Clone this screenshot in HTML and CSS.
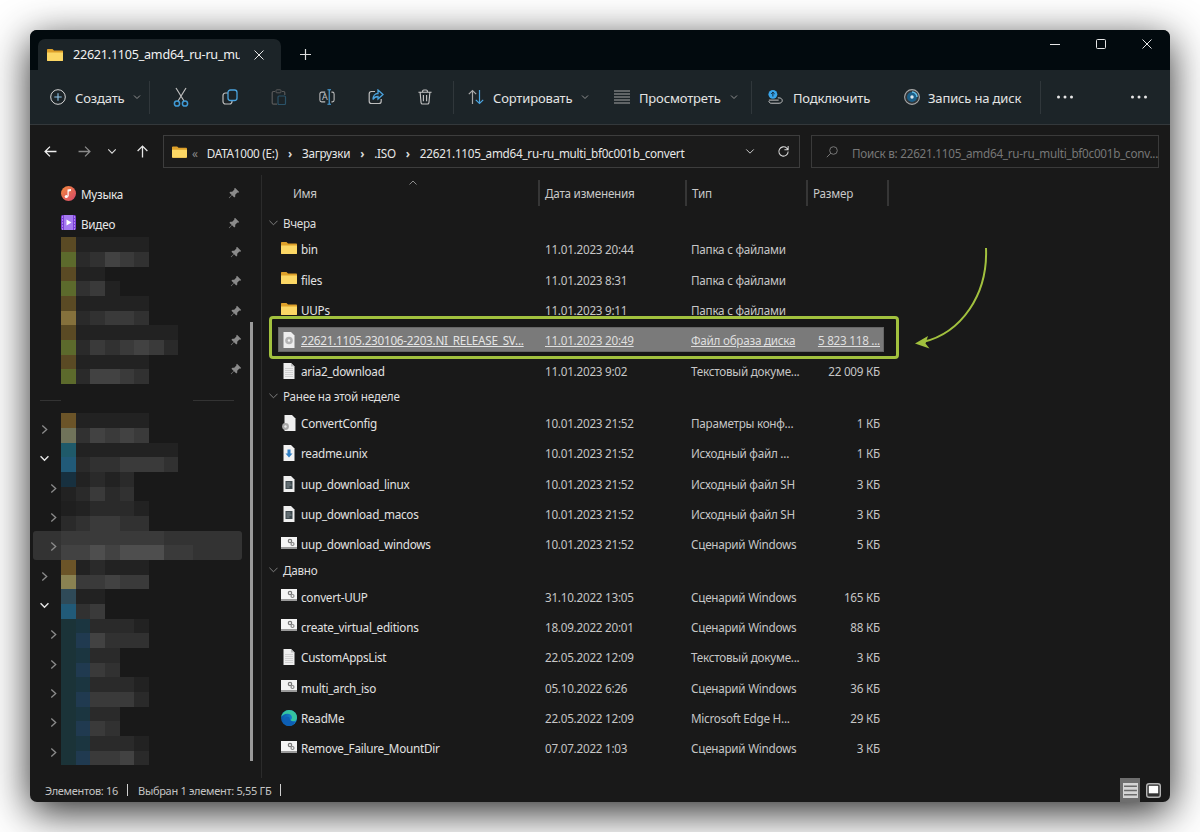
FILE: index.html
```html
<!DOCTYPE html>
<html lang="ru">
<head>
  <meta charset="UTF-8">
  <title>22621.1105_amd64_ru-ru_multi_bf0c001b_convert</title>
  <link rel="stylesheet" href="styles.css">
</head>
<body>
<svg class="sprite" width="0" height="0">
  <defs>
    <linearGradient id="music-grad" x1="0" y1="0" x2="1" y2="1"><stop offset="0" stop-color="#f28a3c"/><stop offset="1" stop-color="#d6476b"/></linearGradient>
    <linearGradient id="edge-grad" x1="0" y1="0" x2="1" y2="0"><stop offset="0" stop-color="#0b56a8"/><stop offset="1" stop-color="#1a93e0"/></linearGradient>
    <symbol id="i-folder" viewBox="0 0 16 14">
      <path d="M0 2c0-.6.4-1 1-1h4.500l1.500 1.500h8c.6 0 1 .4 1 1V12c0 .6-.4 1-1 1H1c-.6 0-1-.4-1-1z" fill="#dda02a"/>
      <path d="M0 4.500h16V12c0 .6-.4 1-1 1H1c-.6 0-1-.4-1-1z" fill="#fbd765"/>
    </symbol>
    <symbol id="i-doc" viewBox="0 0 16 16">
      <path d="M2.500 0H10l3.500 3.500V16h-11z" fill="#eeeeee"/>
      <path d="M10 0v3.500h3.500z" fill="#bdbdbd"/>
      <path d="M4 5.500h8M4 7.500h8M4 9.500h8M4 11.500h8M4 13.500h8" stroke="#c4c4c4" stroke-width=".7"/>
    </symbol>
    <symbol id="i-script" viewBox="0 0 16 12">
      <rect width="16" height="12" fill="#f4f4f4"/>
      <rect y="10" width="16" height="2" fill="#9a9a9a"/>
      <circle cx="9" cy="4" r="1.700" fill="none" stroke="#777" stroke-width="1.200"/>
      <circle cx="11.500" cy="7" r="1.500" fill="none" stroke="#888" stroke-width="1.200"/>
    </symbol>
    <symbol id="i-shell" viewBox="0 0 16 16">
      <path d="M2.500 0H10l3.500 3.500V16h-11z" fill="#f0f0f0"/>
      <rect x="4.500" y="5" width="7" height="8" fill="#3f4a4f"/>
      <path d="M5.500 7h4M5.500 9h5M5.500 11h3" stroke="#9aa5aa" stroke-width=".8"/>
    </symbol>
    <symbol id="i-pin" viewBox="0 0 12 12">
      <path d="M7 .8l4.200 4.200-1 .8-.8-.2-2.200 2.200.1 1.800-1 1L4 8.300 1.200 11.200.8 10.800 3.700 8 1.400 5.700l1-1 1.800.1 2.200-2.200-.2-.8z" fill="#8a8a8a"/>
    </symbol>
    <symbol id="i-chev" viewBox="0 0 8 12">
      <path d="M1.500 1.500L6.500 6l-5 4.500" fill="none" stroke="#8c8c8c" stroke-width="1.500"/>
    </symbol>
    <symbol id="i-down" viewBox="0 0 12 8">
      <path d="M1.500 1.500L6 6l4.500-4.500" fill="none" stroke="#e8e8e8" stroke-width="1.600"/>
    </symbol>
    <symbol id="i-caret" viewBox="0 0 8 6">
      <path d="M1 1.500L4 4.500l3-3" fill="none" stroke="#8f8f8f" stroke-width="1"/>
    </symbol>
    <symbol id="i-dots" viewBox="0 0 18 4">
      <circle cx="2.500" cy="2" r="1.500" fill="#e6e6e6"/><circle cx="9" cy="2" r="1.500" fill="#e6e6e6"/><circle cx="15.500" cy="2" r="1.500" fill="#e6e6e6"/>
    </symbol>
  </defs>
</svg>

<div class="window">
  <div class="titlebar">
    <div class="tab">
      <svg class="tab-folder"><use href="#i-folder"/></svg>
      <span class="tab-title">22621.1105_amd64_ru-ru_multi_bf0c001b_convert</span>
      <svg class="tab-close" viewBox="0 0 10 10"><path d="M.5.500l9 9M9.500.500l-9 9" stroke="#e6e6e6" stroke-width="1"/></svg>
    </div>
    <svg class="tab-new" viewBox="0 0 11 11"><path d="M5.500 0v11M0 5.500h11" stroke="#dcdcdc" stroke-width="1.200"/></svg>
    <div class="win-controls">
      <div class="win-btn"><svg viewBox="0 0 10 10"><path d="M0 5.500h10" stroke="#e6e6e6"/></svg></div>
      <div class="win-btn"><svg viewBox="0 0 10 10"><rect x=".5" y=".5" width="9" height="9" rx="1" fill="none" stroke="#e6e6e6"/></svg></div>
      <div class="win-btn"><svg viewBox="0 0 10 10"><path d="M.5.500l9 9M9.500.500l-9 9" stroke="#e6e6e6"/></svg></div>
    </div>
  </div>

  <div class="commandbar">
    <div class="cmd cmd-new">
      <svg class="cmd-icon" viewBox="0 0 16 16"><circle cx="8" cy="8" r="7.300" fill="none" stroke="#d8d8d8"/><path d="M8 4.300v7.400M4.300 8h7.400" stroke="#8fc4e8" stroke-width="1.100"/></svg>
      <span>Создать</span>
      <svg class="caret"><use href="#i-caret"/></svg>
    </div>
    <div class="cmd-sep"></div>
    <div class="cmd-icons">
      <div class="icon-btn"><svg class="cmd-icon tall" viewBox="0 0 16 20"><path d="M3 1l8 13M13 1L5 14" stroke="#bdbdbd" stroke-width="1.200"/><circle cx="4" cy="16.500" r="2.600" fill="none" stroke="#3f9ad6" stroke-width="1.500"/><circle cx="12" cy="16.500" r="2.600" fill="none" stroke="#3f9ad6" stroke-width="1.500"/></svg></div>
      <div class="icon-btn"><svg class="cmd-icon" viewBox="0 0 16 16"><rect x="1" y="4" width="9" height="11" rx="2.500" fill="none" stroke="#bdbdbd" stroke-width="1.200"/><rect x="6" y="1" width="9" height="10.500" rx="2.500" fill="#1c2327" stroke="#4aa3de" stroke-width="1.300"/></svg></div>
      <div class="icon-btn"><svg class="cmd-icon" viewBox="0 0 16 16"><path d="M4 2.500H2.500c-.8 0-1.300.5-1.300 1.300V14c0 .6.500 1.200 1.300 1.200H6M11 2.500h1.500c.7 0 1.300.5 1.300 1.300V6" fill="none" stroke="#5a5a5a" stroke-width="1.200"/><rect x="5" y=".8" width="5" height="3" rx=".8" fill="none" stroke="#5a5a5a"/><rect x="7" y="7" width="7.500" height="8.500" rx="1" fill="none" stroke="#2a5268" stroke-width="1.200"/></svg></div>
      <div class="icon-btn"><svg class="cmd-icon" viewBox="0 0 18 18"><path d="M7 3.500H3c-1.200 0-2 .8-2 2v7c0 1.200.8 2 2 2h4M14 3.500h1c1.200 0 2 .8 2 2v7c0 1.200-.8 2-2 2h-1" fill="none" stroke="#bdbdbd" stroke-width="1.200"/><text class="rename-a" x="3.500" y="12.500">A</text><path d="M11.500 1v16M9.500.800h4M9.500 17.200h4" stroke="#4aa3de" stroke-width="1.300"/></svg></div>
      <div class="icon-btn"><svg class="cmd-icon" viewBox="0 0 16 16"><path d="M7 2.500H3.500c-1.300 0-2.300 1-2.300 2.300v7.400c0 1.300 1 2.300 2.300 2.300h7.400c1.300 0 2.300-1 2.300-2.300V10" fill="none" stroke="#bdbdbd" stroke-width="1.200"/><path d="M10 1l5 4.500-5 4.500V7.500c-2.500 0-4 1-5 3 0-3.500 2-6 5-6z" fill="none" stroke="#4aa3de" stroke-width="1.300"/></svg></div>
      <div class="icon-btn"><svg class="cmd-icon" viewBox="0 0 16 17"><path d="M1 3.500h14M5.500 3.500V2.200c0-.7.500-1.200 1.200-1.200h2.600c.7 0 1.200.5 1.200 1.200v1.300M2.800 3.500l1 11c.1.900.7 1.500 1.600 1.500h5.200c.9 0 1.500-.6 1.600-1.500l1-11M6.300 6.500v6.500M9.700 6.500v6.500" fill="none" stroke="#c4c4c4" stroke-width="1.200"/></svg></div>
    </div>
    <div class="cmd-sep"></div>
    <div class="cmd cmd-sort">
      <svg class="cmd-icon" viewBox="0 0 16 16"><path d="M4.500 15V1.500M.8 5.200L4.500 1.500l3.700 3.700" fill="none" stroke="#a8a8a8" stroke-width="1.200"/><path d="M11.500 1v13.500M7.800 10.800l3.700 3.700 3.700-3.700" fill="none" stroke="#4aa3de" stroke-width="1.200"/></svg>
      <span>Сортировать</span>
      <svg class="caret"><use href="#i-caret"/></svg>
    </div>
    <div class="cmd cmd-view">
      <svg class="cmd-icon" viewBox="0 0 16 14"><path d="M0 1h16M0 4h16M0 7h16M0 10h16M0 13h16" stroke="#a4a4a4" stroke-width="1.200"/></svg>
      <span>Просмотреть</span>
      <svg class="caret"><use href="#i-caret"/></svg>
    </div>
    <div class="cmd-sep"></div>
    <div class="cmd cmd-connect">
      <svg class="cmd-icon" viewBox="0 0 18 16"><circle cx="5.500" cy="5" r="5" fill="#39a5ea"/><path d="M5.500 7.500v-5M3.500 4.500l2-2 2 2" fill="none" stroke="#10283a" stroke-width="1.100"/><path d="M1 12.500c0 1.300 1 2.500 2.500 2.500h9c2 0 3.500-1.200 3.500-3s-1.500-3-3.500-3H11M1 11.500h11" fill="none" stroke="#c8c8c8" stroke-width="1.100"/></svg>
      <span>Подключить</span>
    </div>
    <div class="cmd cmd-disc">
      <svg class="cmd-icon" viewBox="0 0 16 16"><circle cx="8" cy="8" r="7.400" fill="#30363a" stroke="#a8a8a8" stroke-width="1.100"/><circle cx="8" cy="8" r="5" fill="#1c5f88"/><path d="M8 3a5 5 0 0 1 5 5" fill="none" stroke="#5fbde8" stroke-width="1.500"/><circle cx="8" cy="8" r="1.700" fill="#dfeaf0"/></svg>
      <span>Запись на диск</span>
    </div>
    <div class="cmd-sep"></div>
    <div class="icon-btn"><svg class="dots"><use href="#i-dots"/></svg></div>
    <div class="icon-btn more"><svg class="dots"><use href="#i-dots"/></svg></div>
  </div>

  <div class="addressbar">
    <div class="nav-btns">
      <div class="nav-btn back"><svg viewBox="0 0 12 12"><path d="M11.500 6H1M5.500 1.500L1 6l4.500 4.500" fill="none" stroke="#efefef" stroke-width="1.200"/></svg></div>
      <div class="nav-btn fwd"><svg viewBox="0 0 12 12"><path d="M.5 6H11M6.500 1.500L11 6l-4.500 4.500" fill="none" stroke="#8a8a8a" stroke-width="1.200"/></svg></div>
      <div class="nav-btn hist"><svg class="small" viewBox="0 0 12 8"><path d="M1.500 1.500L6 6l4.500-4.500" fill="none" stroke="#dcdcdc" stroke-width="1.300"/></svg></div>
      <div class="nav-btn up"><svg viewBox="0 0 12 12"><path d="M6 11.500V1M1.500 5.500L6 1l4.500 4.500" fill="none" stroke="#e6e6e6" stroke-width="1.200"/></svg></div>
    </div>
    <div class="path-box">
      <svg class="path-folder"><use href="#i-folder"/></svg>
      <span class="path-more">«</span>
      <span>DATA1000 (E:)</span><span class="crumb">›</span>
      <span>Загрузки</span><span class="crumb">›</span>
      <span>.ISO</span><span class="crumb">›</span>
      <span>22621.1105_amd64_ru-ru_multi_bf0c001b_convert</span>
      <svg class="path-down" viewBox="0 0 12 8"><path d="M1.500 1.500L6 6l4.500-4.500" fill="none" stroke="#c8c8c8" stroke-width="1.200"/></svg>
      <svg class="path-refresh" viewBox="0 0 14 14"><path d="M12 7a5 5 0 1 1-1.500-3.600L12 5M12 1v4H8" fill="none" stroke="#d8d8d8" stroke-width="1.100"/></svg>
    </div>
    <div class="search-box">
      <svg class="search-icon" viewBox="0 0 12 12"><circle cx="7.500" cy="4.500" r="3.800" fill="none" stroke="#777"/><path d="M4.800 7.200L.8 11.200" stroke="#777"/></svg>
      <span>Поиск в: 22621.1105_amd64_ru-ru_multi_bf0c001b_conv...</span>
    </div>
  </div>

  <div class="content">
    <div class="nav-pane">
      <div class="quick-row">
        <span class="quick-icon"><svg viewBox="0 0 15 15"><circle cx="7.500" cy="7.500" r="7.500" fill="url(#music-grad)"/><path d="M6.500 10.500V3.500l3.500-.5v2l-2.300.4v5.100" fill="#fff"/><circle cx="5.300" cy="10.500" r="1.600" fill="#fff"/></svg></span>
        <span class="quick-label">Музыка</span>
        <svg class="pin"><use href="#i-pin"/></svg>
      </div>
      <div class="quick-row">
        <span class="quick-icon"><svg viewBox="0 0 15 15"><rect width="15" height="15" rx="1.500" fill="#7b3fd6"/><rect x="3" width="9" height="15" fill="#a57af0"/><path d="M1 2h1M1 5h1M1 8h1M1 11h1M1 14h1M13 2h1M13 5h1M13 8h1M13 11h1M13 14h1" stroke="#e4d4ff"/><path d="M5.500 4.500l5 3-5 3z" fill="#fff"/></svg></span>
        <span class="quick-label">Видео</span>
        <svg class="pin"><use href="#i-pin"/></svg>
      </div>

      <div class="tree-row">
        <div class="chev-slot"></div>
        <div class="blur"><i class="br"></i><i class="g1"></i><i class="g1"></i><i class="g1"></i><i class="g1"></i><i class="g1"></i><i></i><i></i><i></i><i></i><i></i>
          <i class="gr"></i><i class="g2"></i><i class="g3"></i><i class="g5"></i><i class="g4"></i><i class="g3"></i></div>
        <svg class="pin"><use href="#i-pin"/></svg>
      </div>
      <div class="tree-row">
        <div class="chev-slot"></div>
        <div class="blur"><i class="br"></i><i class="g1"></i><i class="g1"></i><i></i><i></i><i></i><i></i><i></i><i></i><i></i><i></i>
          <i class="gr"></i><i class="g3"></i><i class="g4"></i><i class="g1"></i></div>
        <svg class="pin"><use href="#i-pin"/></svg>
      </div>
      <div class="tree-row">
        <div class="chev-slot"></div>
        <div class="blur"><i class="br"></i><i class="g1"></i><i class="g1"></i><i class="g1"></i><i class="g1"></i><i class="g1"></i><i></i><i></i><i></i><i></i><i></i>
          <i class="ta"></i><i class="g2"></i><i class="g3"></i><i class="g4"></i><i class="g4"></i><i class="g3"></i></div>
        <svg class="pin"><use href="#i-pin"/></svg>
      </div>
      <div class="tree-row">
        <div class="chev-slot"></div>
        <div class="blur"><i class="br"></i><i class="g1"></i><i class="g1"></i><i class="g1"></i><i class="g1"></i><i class="g1"></i><i class="g1"></i><i class="g1"></i><i></i><i></i><i></i>
          <i class="gr"></i><i class="g2"></i><i class="g4"></i><i class="g3"></i><i class="g4"></i><i class="g5"></i><i class="g4"></i><i class="g2"></i></div>
        <svg class="pin"><use href="#i-pin"/></svg>
      </div>
      <div class="tree-row">
        <div class="chev-slot"></div>
        <div class="blur"><i class="br"></i><i class="g1"></i><i class="g1"></i><i class="g1"></i><i class="g1"></i><i class="g1"></i><i></i><i></i><i></i><i></i><i></i>
          <i class="gr"></i><i class="g2"></i><i class="g5"></i><i class="g5"></i><i class="g4"></i><i class="g3"></i></div>
        <svg class="pin"><use href="#i-pin"/></svg>
      </div>

      <div class="tree-sep"><span></span><span></span></div>

      <div class="tree-row">
        <div class="chev-slot"><svg class="chev"><use href="#i-chev"/></svg></div>
        <div class="blur"><i class="or"></i><i class="g1"></i><i class="g1"></i><i class="g1"></i><i class="g1"></i><i class="g1"></i><i></i><i></i><i></i><i></i><i></i>
          <i class="ol"></i><i class="g3"></i><i class="g5"></i><i class="g4"></i><i class="g5"></i><i class="g4"></i></div>
      </div>
      <div class="tree-row">
        <div class="chev-slot"><svg class="open"><use href="#i-down"/></svg></div>
        <div class="blur"><i class="te"></i><i class="g1"></i><i class="g1"></i><i class="g1"></i><i class="g1"></i><i class="g1"></i><i class="g1"></i><i class="g1"></i><i></i><i></i><i></i>
          <i class="bl"></i><i class="g2"></i><i class="g3"></i><i class="g3"></i><i class="g4"></i><i class="g4"></i><i class="g4"></i><i class="g3"></i></div>
      </div>
      <div class="tree-row">
        <div class="chev-slot indent"><svg class="chev"><use href="#i-chev"/></svg></div>
        <div class="blur"><i class="nv"></i><i class="g1"></i><i class="g2"></i><i class="g1"></i><i class="g2"></i><i></i><i></i><i></i><i></i><i></i><i></i>
          <i class="g1"></i><i class="g2"></i><i class="g4"></i><i class="g2"></i><i class="g3"></i></div>
      </div>
      <div class="tree-row">
        <div class="chev-slot indent"><svg class="chev"><use href="#i-chev"/></svg></div>
        <div class="blur"><i class="g0"></i><i class="g1"></i><i class="g2"></i><i class="g2"></i><i class="g2"></i><i class="g1"></i><i></i><i></i><i></i><i></i><i></i>
          <i class="g2"></i><i class="g3"></i><i class="g4"></i><i class="g4"></i><i class="g3"></i><i class="g3"></i></div>
      </div>
      <div class="tree-row hover">
        <div class="chev-slot indent"><svg class="chev"><use href="#i-chev"/></svg></div>
        <div class="blur"><i class="g4"></i><i class="g4"></i><i class="g4"></i><i class="g4"></i><i class="g4"></i><i class="g4"></i><i class="g4"></i><i></i><i></i><i></i><i></i>
          <i class="g5"></i><i class="g5"></i><i class="g6"></i><i class="g5"></i><i class="g6"></i><i class="g6"></i><i class="g6"></i><i class="g4"></i><i class="g4"></i></div>
      </div>
      <div class="tree-row">
        <div class="chev-slot"><svg class="chev"><use href="#i-chev"/></svg></div>
        <div class="blur"><i class="or"></i><i class="g1"></i><i class="g2"></i><i class="g1"></i><i class="g1"></i><i class="g1"></i><i></i><i></i><i></i><i></i><i></i>
          <i class="ye"></i><i class="g4"></i><i class="g4"></i><i class="g5"></i><i class="g4"></i><i class="g4"></i></div>
      </div>
      <div class="tree-row">
        <div class="chev-slot"><svg class="open"><use href="#i-down"/></svg></div>
        <div class="blur"><i class="sl"></i><i class="g1"></i><i class="g1"></i><i></i><i></i><i></i><i></i><i></i><i></i><i></i><i></i>
          <i class="bl"></i><i class="g3"></i><i class="g4"></i></div>
      </div>
      <div class="tree-row">
        <div class="chev-slot indent"><svg class="chev"><use href="#i-chev"/></svg></div>
        <div class="blur"><i class="dt"></i><i class="db"></i><i class="g2"></i><i class="g2"></i><i class="g2"></i><i class="g1"></i><i></i><i></i><i></i><i></i><i></i>
          <i class="dt"></i><i class="dc"></i><i class="g5"></i><i class="g3"></i><i class="g3"></i><i class="g3"></i></div>
      </div>
      <div class="tree-row">
        <div class="chev-slot indent"><svg class="chev"><use href="#i-chev"/></svg></div>
        <div class="blur"><i class="dt"></i><i class="db"></i><i class="g2"></i><i class="g2"></i><i></i><i></i><i></i><i></i><i></i><i></i><i></i>
          <i class="dt"></i><i class="dc"></i><i class="g4"></i><i class="g3"></i></div>
      </div>
      <div class="tree-row">
        <div class="chev-slot indent"><svg class="chev"><use href="#i-chev"/></svg></div>
        <div class="blur"><i class="dt"></i><i class="db"></i><i class="g2"></i><i class="g2"></i><i class="g2"></i><i class="g1"></i><i></i><i></i><i></i><i></i><i></i>
          <i class="dt"></i><i class="dc"></i><i class="g4"></i><i class="g4"></i><i class="g4"></i><i class="g2"></i></div>
      </div>
      <div class="tree-row">
        <div class="chev-slot indent"><svg class="chev"><use href="#i-chev"/></svg></div>
        <div class="blur"><i class="dt"></i><i class="db"></i><i class="g2"></i><i class="g2"></i><i></i><i></i><i></i><i></i><i></i><i></i><i></i>
          <i class="dt"></i><i class="dc"></i><i class="g4"></i><i class="g3"></i></div>
      </div>
      <div class="tree-row">
        <div class="chev-slot indent"><svg class="chev"><use href="#i-chev"/></svg></div>
        <div class="blur"><i class="dt"></i><i class="db"></i><i class="g2"></i><i class="g2"></i><i class="g2"></i><i class="g1"></i><i></i><i></i><i></i><i></i><i></i>
          <i class="dt"></i><i class="dc"></i><i class="g4"></i><i class="g4"></i><i class="g5"></i><i class="g2"></i></div>
      </div>
      <div class="nav-scroll"></div>
    </div>

    <div class="file-pane">
      <div class="col-head">
        <div class="col col-name">Имя<svg class="sort-mark" viewBox="0 0 8 5"><path d="M.5 4.500L4 1l3.500 3.500" fill="none" stroke="#8c8c8c"/></svg></div>
        <div class="col col-date">Дата изменения</div>
        <div class="col col-type">Тип</div>
        <div class="col col-size">Размер</div>
      </div>

      <div class="group-head"><svg viewBox="0 0 10 6"><path d="M.5.500L5 5 9.500.500" fill="none" stroke="#8a8a8a"/></svg>Вчера</div>
      <div class="row"><div class="name"><svg class="ficon folder"><use href="#i-folder"/></svg><span>bin</span></div><div>11.01.2023 20:44</div><div>Папка с файлами</div><div class="size"></div></div>
      <div class="row"><div class="name"><svg class="ficon folder"><use href="#i-folder"/></svg><span>files</span></div><div>11.01.2023 8:31</div><div>Папка с файлами</div><div class="size"></div></div>
      <div class="row"><div class="name"><svg class="ficon folder"><use href="#i-folder"/></svg><span>UUPs</span></div><div>11.01.2023 9:11</div><div>Папка с файлами</div><div class="size"></div></div>
      <div class="row selected">
        <div class="name"><svg class="ficon" viewBox="0 0 16 16"><path d="M2.500 0H10l3.500 3.500V16h-11z" fill="#eeeeee"/><circle cx="8" cy="8.500" r="3.800" fill="#b4b4b4"/><circle cx="8" cy="8.500" r="1.200" fill="#f4f4f4"/></svg><span>22621.1105.230106-2203.NI_RELEASE_SV...</span></div>
        <div><span>11.01.2023 20:49</span></div><div><span>Файл образа диска</span></div><div class="size"><span>5 823 118 ...</span></div>
      </div>
      <div class="row"><div class="name"><svg class="ficon"><use href="#i-doc"/></svg><span>aria2_download</span></div><div>11.01.2023 9:02</div><div>Текстовый докуме...</div><div class="size">22 009 КБ</div></div>

      <div class="group-head"><svg viewBox="0 0 10 6"><path d="M.5.500L5 5 9.500.500" fill="none" stroke="#8a8a8a"/></svg>Ранее на этой неделе</div>
      <div class="row"><div class="name"><svg class="ficon" viewBox="0 0 16 16"><path d="M3.500 0H11l3.500 3.500V16h-11z" fill="#eeeeee"/><circle cx="4.500" cy="11.500" r="3.400" fill="#a8a8a8"/><circle cx="4.500" cy="11.500" r="1.200" fill="#e8e8e8"/></svg><span>ConvertConfig</span></div><div>10.01.2023 21:52</div><div>Параметры конф...</div><div class="size">1 КБ</div></div>
      <div class="row"><div class="name"><svg class="ficon" viewBox="0 0 16 16"><path d="M2.500 0H10l3.500 3.500V16h-11z" fill="#f2f2f2"/><path d="M6.500 4.500h3v4h2L8 12.500l-3.500-4h2z" fill="#2f7fc4"/></svg><span>readme.unix</span></div><div>10.01.2023 21:52</div><div>Исходный файл ...</div><div class="size">1 КБ</div></div>
      <div class="row"><div class="name"><svg class="ficon"><use href="#i-shell"/></svg><span>uup_download_linux</span></div><div>10.01.2023 21:52</div><div>Исходный файл SH</div><div class="size">3 КБ</div></div>
      <div class="row"><div class="name"><svg class="ficon"><use href="#i-shell"/></svg><span>uup_download_macos</span></div><div>10.01.2023 21:52</div><div>Исходный файл SH</div><div class="size">3 КБ</div></div>
      <div class="row"><div class="name"><svg class="ficon script"><use href="#i-script"/></svg><span>uup_download_windows</span></div><div>10.01.2023 21:52</div><div>Сценарий Windows</div><div class="size">5 КБ</div></div>

      <div class="group-head"><svg viewBox="0 0 10 6"><path d="M.5.500L5 5 9.500.500" fill="none" stroke="#8a8a8a"/></svg>Давно</div>
      <div class="row"><div class="name"><svg class="ficon script"><use href="#i-script"/></svg><span>convert-UUP</span></div><div>31.10.2022 13:05</div><div>Сценарий Windows</div><div class="size">165 КБ</div></div>
      <div class="row"><div class="name"><svg class="ficon script"><use href="#i-script"/></svg><span>create_virtual_editions</span></div><div>18.09.2022 20:01</div><div>Сценарий Windows</div><div class="size">88 КБ</div></div>
      <div class="row"><div class="name"><svg class="ficon"><use href="#i-doc"/></svg><span>CustomAppsList</span></div><div>22.05.2022 12:09</div><div>Текстовый докуме...</div><div class="size">3 КБ</div></div>
      <div class="row"><div class="name"><svg class="ficon script"><use href="#i-script"/></svg><span>multi_arch_iso</span></div><div>05.10.2022 6:26</div><div>Сценарий Windows</div><div class="size">36 КБ</div></div>
      <div class="row"><div class="name"><svg class="ficon" viewBox="0 0 16 16"><circle cx="8" cy="8" r="8" fill="url(#edge-grad)"/><path d="M.3 7C1 3 4.300 0 8 0c4.500 0 8 3.300 8 7.500 0 2.500-2 4-4.300 4-1.500 0-2.700-.5-3.200-1.200 1.500-.3 2.500-1.300 2.500-2.800C11 5 8.500 3.500 6 3.800 3.500 4 1.500 5.300.3 7z" fill="#35c4a0"/><path d="M8.500 7.500c0 2.500 2 4 4.500 4 .5 0 1-.1 1.500-.3C13.300 14 10.800 16 8 16c-3.500 0-6-3-4.800-6.500C4 7 6 5.700 8.500 7.500z" fill="#0d5fb5"/></svg><span>ReadMe</span></div><div>22.05.2022 12:09</div><div>Microsoft Edge H...</div><div class="size">29 КБ</div></div>
      <div class="row"><div class="name"><svg class="ficon script"><use href="#i-script"/></svg><span>Remove_Failure_MountDir</span></div><div>07.07.2022 1:03</div><div>Сценарий Windows</div><div class="size">3 КБ</div></div>

      <svg class="callout-arrow" viewBox="0 0 80 105"><path d="M73 1C75 48 48 86 10 95" fill="none" stroke="#a2c13e" stroke-width="2"/><path d="M2 96.500L15 89l-2.500 7.500 4 5z" fill="#a2c13e"/></svg>
    </div>
  </div>

  <div class="statusbar">
    <span>Элементов: 16</span><span class="status-bar-sep"></span>
    <span>Выбран 1 элемент: 5,55 ГБ</span><span class="status-bar-sep"></span>
    <div class="view-btns">
      <div class="view-btn active"><svg viewBox="0 0 14 14"><rect width="14" height="14" fill="#d4d4d4"/><path d="M1 3h12M1 7h12M1 11h12" stroke="#6a6a6a" stroke-width="1.500"/></svg></div>
      <div class="view-btn"><svg viewBox="0 0 16 16"><rect x=".75" y=".75" width="14.500" height="14.500" rx="2.500" fill="#333" stroke="#b4b4b4" stroke-width="1.500"/><rect x="3" y="3" width="10" height="8" fill="#fff"/></svg></div>
    </div>
  </div>
</div>
</body>
</html>
```

FILE: styles.css
```css
* {
  box-sizing: border-box;
}

html, body {
  margin: 0;
  background: #fff;
}

body {
  padding: 30px;
  width: 1200px;
  height: 832px;
  overflow: hidden;
  font-family: "Noto Sans", "Open Sans", sans-serif;
  font-size: 11.7px;
  letter-spacing: -.25px;
  color: #dcdcdc;
}

.sprite {
  position: absolute;
}

svg {
  display: block;
  flex: none;
}

.window {
  width: 1140px;
  height: 772px;
  display: flex;
  flex-direction: column;
  background: #191919;
  border-radius: 7px;
  overflow: hidden;
  box-shadow: 0 10px 40px rgba(0, 0, 0, .85);
}

/* title bar */
.titlebar {
  height: 40px;
  flex: none;
  display: flex;
  align-items: flex-end;
  padding-left: 8px;
  background: #020a0e;
}

.tab {
  width: 243px;
  height: 31px;
  display: flex;
  align-items: center;
  padding-left: 9px;
  background: #1c2428;
  border-radius: 7px 7px 0 0;
}

.tab-folder {
  width: 16px;
  height: 14px;
}

.tab-title {
  width: 167px;
  margin-left: 10px;
  overflow: hidden;
  white-space: nowrap;
  font-size: 12.6px;
  color: #f2f2f2;
}

.tab-close {
  width: 10px;
  height: 10px;
  margin-left: 14px;
}

.tab-new {
  width: 11px;
  height: 11px;
  margin: 0 0 10px 19px;
}

.win-controls {
  margin-left: auto;
  align-self: flex-start;
  display: flex;
}

.win-btn {
  width: 46px;
  height: 28px;
  display: flex;
  align-items: center;
  justify-content: center;
}

.win-btn svg {
  width: 10px;
  height: 10px;
}

/* command bar */
.commandbar {
  height: 55px;
  flex: none;
  display: flex;
  align-items: center;
  padding-left: 20px;
  background: #1c2428;
  border-bottom: 1px solid #33383b;
}

.cmd {
  height: 36px;
  display: flex;
  align-items: center;
  gap: 9px;
  font-size: 13px;
  letter-spacing: -.15px;
  color: #e4e4e4;
}

.cmd span {
  padding-top: 2px;
}

.cmd-icon {
  width: 16px;
  height: 16px;
}

.cmd-icon.tall {
  height: 20px;
}

.caret {
  width: 8px;
  height: 6px;
  margin-left: auto;
}

.cmd-sep {
  width: 1px;
  height: 33px;
  background: #30373b;
}

.cmd-new {
  width: 99px;
}

.cmd-new .caret {
  margin-right: 12px;
}

.cmd-icons {
  display: flex;
  margin: 0 3.6px 0 6.6px;
}

.icon-btn {
  width: 48px;
  height: 36px;
  display: flex;
  align-items: center;
  justify-content: center;
}

.cmd-icons .icon-btn {
  width: 48.8px;
}

.rename-a {
  font-family: "Noto Sans", sans-serif;
  font-size: 10px;
  fill: #c4c4c4;
}

.icon-btn.more {
  margin: 0 7px 0 auto;
}

.dots {
  width: 18px;
  height: 4px;
}

.cmd-sort {
  width: 146px;
  margin-left: 14px;
}

.cmd-sort .caret {
  margin-right: 29px;
}

.cmd-view {
  width: 137px;
}

.cmd-view .caret {
  margin-right: 17px;
}

.cmd-connect {
  width: 136px;
  margin-left: 16px;
}

.cmd-disc {
  width: 136px;
  gap: 8px;
}

/* address row */
.addressbar {
  height: 50px;
  flex: none;
  display: flex;
  align-items: flex-start;
  padding-top: 10px;
}

.nav-btns {
  width: 133px;
  height: 33px;
  display: flex;
  padding-left: 1px;
}

.nav-btn {
  display: flex;
  align-items: center;
  justify-content: center;
}

.nav-btn svg {
  width: 13px;
  height: 13px;
}

.nav-btn svg.small {
  width: 10px;
  height: 7px;
}

.back { width: 38px; }
.fwd { width: 30px; }
.hist { width: 26px; }
.up { width: 34px; }

.path-box {
  width: 637px;
  height: 33px;
  display: flex;
  align-items: center;
  padding-left: 8px;
  border: 1px solid #3d3d3d;
  background: #1b1b1b;
  white-space: nowrap;
  color: #e8e8e8;
}

.path-box span {
  padding-top: 2px;
}

.path-folder {
  width: 15px;
  height: 14px;
}

.path-more {
  margin: 0 9px 0 5px;
  color: #888;
}

.crumb {
  width: 24px;
  text-align: center;
  font-weight: 700;
  color: #d8d8d8;
}

.path-down {
  width: 10px;
  height: 7px;
  margin-left: auto;
}

.path-refresh {
  width: 13px;
  height: 13px;
  margin: 0 9px 0 22px;
}

.search-box {
  width: 348px;
  height: 33px;
  margin-left: 11px;
  display: flex;
  align-items: center;
  gap: 14px;
  padding-left: 14px;
  border: 1px solid #3a3a3a;
  white-space: nowrap;
  color: #777;
}

.search-box span {
  padding-top: 2px;
}

.search-icon {
  width: 12px;
  height: 12px;
}

/* main area */
.content {
  flex: 1;
  display: flex;
  min-height: 0;
}

.nav-pane {
  width: 232px;
  flex: none;
  position: relative;
  padding-top: 3.7px;
  border-right: 1px solid #2b2b2b;
}

.quick-row {
  height: 29.33px;
  display: flex;
  align-items: center;
  padding-left: 31px;
  color: #e8e8e8;
}

.quick-icon {
  width: 15px;
  height: 15px;
}

.quick-label {
  margin-left: 5px;
  padding-top: 2px;
}

.pin {
  width: 12px;
  height: 12px;
  margin-left: auto;
}

.quick-row .pin {
  margin-right: 21px;
}

.tree-row {
  width: 209px;
  height: 29.33px;
  margin-left: 3px;
  display: flex;
  align-items: center;
  border-radius: 3px;
}

.tree-row.hover {
  background: #333;
}

.chev-slot {
  width: 28px;
  height: 100%;
  flex: none;
  display: flex;
  align-items: center;
  padding: 3px 0 0 8px;
}

.chev-slot.indent {
  padding-left: 17px;
}

.chev {
  width: 7px;
  height: 11px;
}

.open {
  width: 11px;
  height: 7px;
  margin-left: -2px;
}

/* the pixelated names of the folders */
.blur {
  display: grid;
  grid-template-columns: repeat(11, 14.67px);
  grid-auto-rows: 14.67px;
}

.blur i { display: block; }
.g0 { background: #1f1f1f; }
.g1 { background: #222; }
.g2 { background: #2a2a2a; }
.g3 { background: #313131; }
.g4 { background: #3a3a3a; }
.g5 { background: #424242; }
.g6 { background: #4e4e4e; }
.br { background: #5a4a24; }
.gr { background: #5c6a2c; }
.ta { background: #85713c; }
.or { background: #6b5428; }
.ol { background: #70735a; }
.ye { background: #8a8252; }
.te { background: #1f5a6a; }
.bl { background: #215a78; }
.nv { background: #17303f; }
.sl { background: #2f4a58; }
.dt { background: #1b3338; }
.db { background: #1b3540; }
.dc { background: #203a50; }

.tree-sep {
  height: 1px;
  margin: 16px 27px 12.3px 10px;
  display: flex;
  justify-content: space-between;
}

.tree-sep span {
  height: 1px;
  width: 21px;
  background: #333;
}

.tree-sep span:last-child {
  width: 41px;
}

.nav-scroll {
  position: absolute;
  left: 220px;
  top: 147px;
  width: 3px;
  height: 439px;
  background: #9a9a9a;
}

/* file list */
.file-pane {
  flex: 1;
  position: relative;
  padding-top: 4px;
}

.col-head {
  height: 27px;
  margin-bottom: 6px;
  display: flex;
  padding-top: 1px;
  color: #c8c8c8;
}

.col {
  display: flex;
  align-items: center;
  padding-left: 5px;
  border-right: 2px solid #363636;
}

.col-name {
  width: 278px;
  padding-left: 31px;
  position: relative;
}

.sort-mark {
  position: absolute;
  left: 147px;
  top: 0;
  width: 8px;
  height: 5px;
}

.col-date { width: 147px; }
.col-type { width: 121px; }
.col-size { width: 81px; }

.group-head {
  height: 22px;
  display: flex;
  align-items: center;
  gap: 5px;
  padding-left: 7px;
  padding-bottom: 1px;
  color: #dedede;
}

.group-head svg {
  width: 9px;
  height: 6px;
}

.row {
  width: 606px;
  height: 30.33px;
  margin-left: 16px;
  padding-top: .4px;
  display: grid;
  grid-template-columns: 267px 146px 122px 71px;
  align-items: center;
  color: #c6c6c6;
  white-space: nowrap;
}

.name {
  display: flex;
  align-items: center;
  gap: 4px;
  padding-left: 3px;
  color: #e2e2e2;
}

.ficon {
  width: 16px;
  height: 16px;
}

.ficon.folder {
  height: 14px;
  margin-bottom: 3px;
}

.ficon.script {
  height: 12px;
  margin-bottom: 3px;
}

.size {
  text-align: right;
  padding-right: 4px;
}

.row.selected {
  position: relative;
  z-index: 1;
  color: #dedede;
}

.row.selected span {
  text-decoration: underline;
}

.row.selected .name {
  color: #e4e4e4;
}

/* green frame from the annotation */
.row.selected::before {
  content: "";
  position: absolute;
  inset: -9px -15px -4px -9px;
  z-index: -2;
  background: #171717;
  border: 3px solid #a2c13e;
  border-radius: 4px;
}

.row.selected::after {
  content: "";
  position: absolute;
  inset: 2px 0 3px 0;
  z-index: -1;
  background: #7a7a7a;
  border: 1px solid #666;
}

.callout-arrow {
  position: absolute;
  left: 651px;
  top: 72px;
  width: 80px;
  height: 105px;
}

/* status bar */
.statusbar {
  height: 24px;
  flex: none;
  display: flex;
  align-items: center;
  padding-left: 15px;
  font-size: 11px;
  letter-spacing: -.3px;
  color: #c4c4c4;
}

.status-bar-sep {
  width: 1px;
  height: 12px;
  margin: 0 10px 0 9px;
  background: #d0d0d0;
}

.view-btns {
  margin-left: auto;
  height: 100%;
  display: flex;
  align-items: center;
  gap: 3px;
  padding-right: 7px;
}

.view-btn {
  width: 20px;
  height: 24px;
  display: flex;
  align-items: center;
  justify-content: center;
}

.view-btn.active {
  background: #6e6e6e;
}

.view-btn svg {
  width: 15px;
  height: 15px;
}
```
